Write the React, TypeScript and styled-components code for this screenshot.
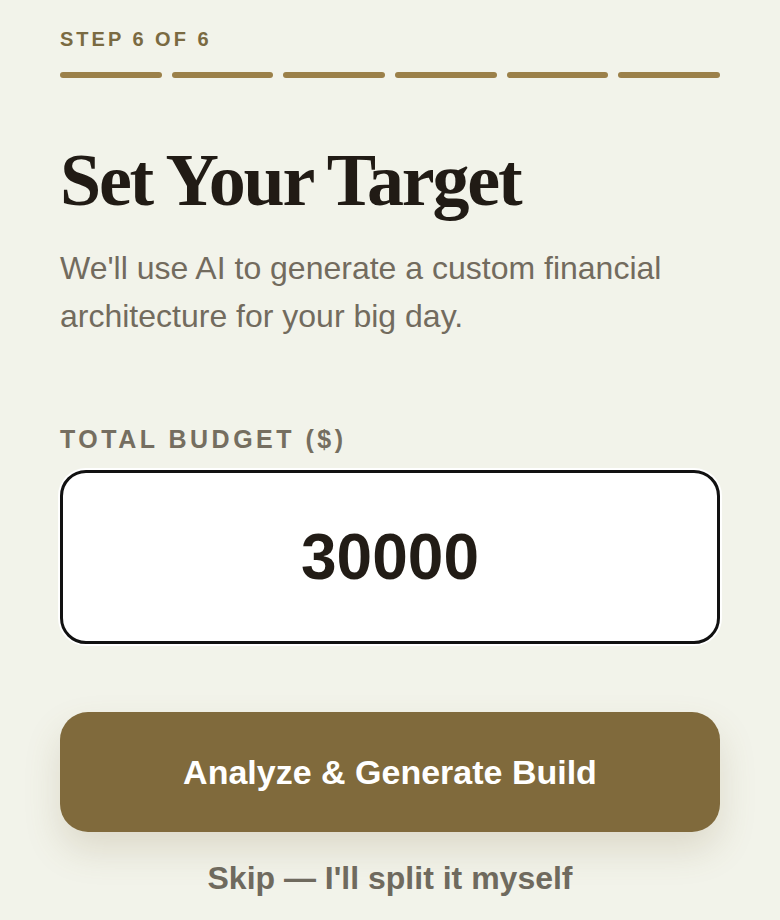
import React, { useState } from "react";
import styled, { createGlobalStyle } from "styled-components";

const GlobalStyle = createGlobalStyle`
  html, body {
    margin: 0;
    padding: 0;
    background: #f2f3ea;
  }
  body {
    font-family: "Liberation Sans", Arial, sans-serif;
  }
`;

const Page = styled.div`
  display: flex;
  flex-direction: column;
  padding: 27px 60px 0;
  min-height: 920px;
  box-sizing: border-box;
`;

const StepLabel = styled.div`
  font-size: 20px;
  font-weight: 700;
  letter-spacing: 3px;
  line-height: 24px;
  color: #7a6a41;
`;

const Progress = styled.div`
  display: grid;
  grid-template-columns: repeat(6, 1fr);
  gap: 10px;
  margin-top: 21px;
`;

const Segment = styled.div<{ $active: boolean }>`
  height: 6px;
  border-radius: 3px;
  background: ${(p) => (p.$active ? "#9b8049" : "#ddd9c8")};
`;

const Title = styled.h1`
  margin: 62px 0 0;
  font-family: "Liberation Serif", "Times New Roman", serif;
  font-size: 74px;
  font-weight: 700;
  letter-spacing: -2.2px;
  line-height: 80px;
  color: #211b15;
`;

const Subtitle = styled.p`
  margin: 24px 0 0;
  font-size: 32px;
  line-height: 48px;
  color: #726b5e;
`;

const FieldLabel = styled.label`
  display: block;
  margin-top: 84px;
  font-size: 25px;
  font-weight: 700;
  letter-spacing: 3.5px;
  line-height: 30px;
  color: #756e60;
`;

const BudgetInput = styled.input`
  margin-top: 16px;
  height: 174px;
  box-sizing: border-box;
  width: 100%;
  border: 3px solid #111;
  border-radius: 26px;
  background: #fff;
  box-shadow: 0 0 0 2px #fff;
  text-align: center;
  font-family: "Liberation Sans", Arial, sans-serif;
  font-size: 64px;
  font-weight: 700;
  color: #221c16;
  outline: none;
`;

const PrimaryButton = styled.button`
  margin-top: 68px;
  height: 120px;
  width: 100%;
  border: none;
  border-radius: 28px;
  background: #806a3c;
  color: #fff;
  font-family: "Liberation Sans", Arial, sans-serif;
  font-size: 34px;
  font-weight: 700;
  box-shadow: 0 18px 36px rgba(128, 106, 60, 0.18);
  cursor: pointer;
`;

const SkipLink = styled.button`
  margin: 26px auto 0;
  border: none;
  background: none;
  padding: 0;
  font-family: "Liberation Sans", Arial, sans-serif;
  font-size: 32px;
  font-weight: 700;
  line-height: 40px;
  color: #6f6a5e;
  cursor: pointer;
`;

export default function App() {
  const [budget, setBudget] = useState("30000");
  const steps = 6;
  const current = 6;

  return (
    <>
      <GlobalStyle />
      <Page>
        <StepLabel>
          STEP {current} OF {steps}
        </StepLabel>
        <Progress>
          {Array.from({ length: steps }).map((_, i) => (
            <Segment key={i} $active={i < current} />
          ))}
        </Progress>
        <Title>Set Your Target</Title>
        <Subtitle>
          We'll use AI to generate a custom financial architecture for your big day.
        </Subtitle>
        <FieldLabel htmlFor="budget">TOTAL BUDGET ($)</FieldLabel>
        <BudgetInput
          id="budget"
          value={budget}
          onChange={(e) => setBudget(e.target.value)}
        />
        <PrimaryButton>Analyze &amp; Generate Build</PrimaryButton>
        <SkipLink>Skip — I'll split it myself</SkipLink>
      </Page>
    </>
  );
}
